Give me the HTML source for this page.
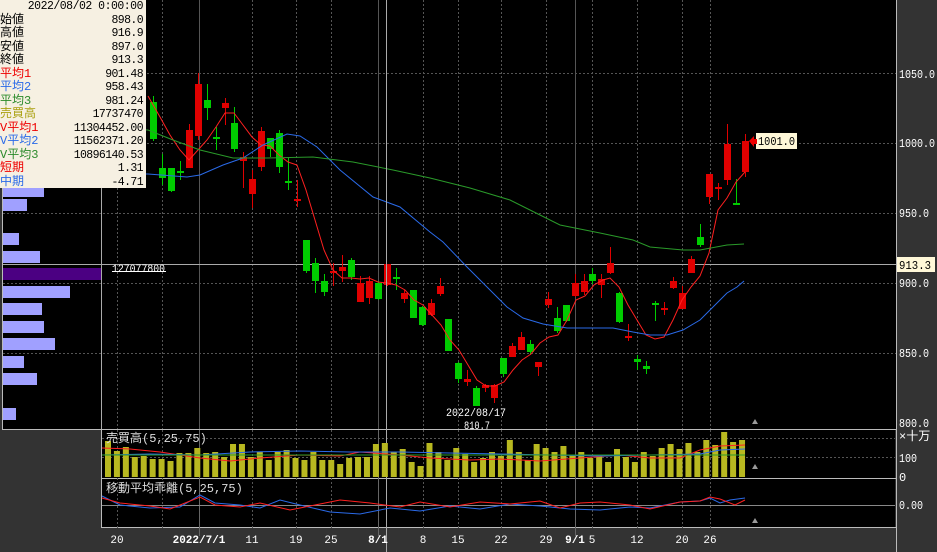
<!DOCTYPE html>
<html><head><meta charset="utf-8">
<style>
html,body{margin:0;padding:0;background:#333;width:937px;height:552px;overflow:hidden}
#info{position:absolute;left:0;top:0;width:146px;height:188px;background:#f6f0e2;font:12px "Liberation Mono","Noto Sans CJK JP",monospace;}
#info div{height:13.5px;line-height:13.5px;position:relative;white-space:nowrap}
#info span{position:absolute;right:3px;top:0;color:#000;font-size:11.5px;letter-spacing:-0.6px}
</style></head><body>
<svg id="s" width="937" height="552" style="position:absolute;left:0;top:0" font-family="Liberation Mono, monospace"></svg>
<div id="info">
<div style="text-align:right;padding-right:3px;color:#000;font-size:11.5px;letter-spacing:-0.5px">2022/08/02 0:00:00</div>
<div style="color:#000">始値<span>898.0</span></div>
<div style="color:#000">高値<span>916.9</span></div>
<div style="color:#000">安値<span>897.0</span></div>
<div style="color:#000">終値<span>913.3</span></div>
<div style="color:#e00">平均1<span>901.48</span></div>
<div style="color:#2a6ae8">平均2<span>958.43</span></div>
<div style="color:#2a8a2a">平均3<span>981.24</span></div>
<div style="color:#aaa010">売買高<span>17737470</span></div>
<div style="color:#e00">V平均1<span>11304452.00</span></div>
<div style="color:#2a6ae8">V平均2<span>11562371.20</span></div>
<div style="color:#2a8a2a">V平均3<span>10896140.53</span></div>
<div style="color:#e00">短期<span>1.31</span></div>
<div style="color:#2a6ae8">中期<span>-4.71</span></div>
</div>
<script>
var s=document.getElementById('s'),h='';
function R(x,y,w,hh,c){h+='<rect x="'+x+'" y="'+y+'" width="'+w+'" height="'+hh+'" fill="'+c+'"/>';}
function L(x1,y1,x2,y2,c,d){h+='<line x1="'+x1+'" y1="'+y1+'" x2="'+x2+'" y2="'+y2+'" stroke="'+c+'" stroke-width="1"'+(d?' stroke-dasharray="2,2"':'')+'/>';}
function P(pts,c){h+='<polyline fill="none" stroke="'+c+'" stroke-width="1" points="'+pts.map(function(p){return p.join(',')}).join(' ')+'"/>';}
function T(x,y,t,c,sz,a,w,tl){h+='<text x="'+x+'" y="'+y+'" fill="'+c+'" font-size="'+(sz||11)+'"'+(a?' text-anchor="'+a+'"':'')+(w?' font-weight="bold"':'')+(tl?' textLength="'+tl+'" lengthAdjust="spacingAndGlyphs"':'')+'>'+t+'</text>';}
R(0,0,937,552,'#333');
R(3,0,893,429,'#000');
R(102,430,793,98,'#000');
[73,143,213,283,353].forEach(function(y){L(3,y+.5,896,y+.5,'#555',1)});
[117,162,252,296,331,423,458,501,546,592,637,682,710].forEach(function(x){L(x+.5,0,x+.5,429,'#555',1)});
[199,378,575].forEach(function(x){L(x+.5,0,x+.5,429,'#555')});
var vp=[[185,41],[199,24],[233,16],[251,37],[286,67],[303,39],[321,41],[338,52],[356,21],[373,34],[408,13]];
vp.forEach(function(b){R(3,b[0],b[1],12,'#a0a0ff')});
R(3,268,98,12,'#4b0082');
L(101.5,188,101.5,429,'#aaa');
L(3,264.5,896,264.5,'#aaa');
T(112,272,'127077800','#fff',11,0,0,53);
L(112,271.5,166,271.5,'#fff');
var C=[
[153,'g',102,139,96,141],[162,'g',168,178,154,185],[171,'g',168,191,168,192],[180,'g',171,173,161,180],[189,'r',130,168,124,168],[198,'r',84,136,73,140],[207,'g',100,108,84,120],[216,'g',137,139,127,150],[225,'r',103,108,98,125],[234,'g',123,149,107,152],[243,'r',157,161,152,188],[252,'r',179,194,170,208],[261,'r',131,167,127,171],[270,'g',138,149,138,157],[279,'g',133,167,130,173],[288,'g',181,183,158,190],[297,'r',199,201,180,207],[306,'g',240,271,240,273],[315,'g',263,281,258,293],[324,'g',281,292,274,296],[333,'r',271,273,263,286],[342,'r',267,271,255,282],[351,'g',260,277,258,280],[360,'r',283,302,276,302],[369,'r',281,298,276,304],[378,'g',283,299,281,300],[387,'r',264,285,264,286],[396,'g',277,279,268,290],
[404,'r',293,299,290,303],[413,'g',290,318,290,318],[422,'g',307,325,306,326],[431,'r',303,315,299,316],[440,'r',286,294,278,296],[448,'g',319,351,319,351],[458,'g',363,379,362,383],[467,'r',379,382,370,386],[476,'g',388,406,386,406],[485,'r',385,388,384,392],[494,'r',385,398,384,403],[503,'g',358,374,358,377],[512,'r',346,357,343,357],[521,'r',337,350,332,350],[530,'g',344,352,340,354],[538,'r',362,367,362,376],[548,'r',299,305,292,308],[557,'g',318,331,307,333],[566,'g',305,321,305,322],[575,'r',283,296,274,297],[584,'r',281,292,274,295],[592,'g',274,281,268,284],[601,'r',279,285,274,298],[610,'r',263,273,247,274],[619,'g',293,322,292,323],[628,'r',336,338,324,341],[637,'g',359,362,355,370],[646,'g',366,369,361,374],[655,'g',303,305,301,321],[664,'r',308,310,302,315],[673,'r',281,288,277,289],[682,'r',293,309,286,309],[691,'r',259,273,256,273],[700,'g',237,245,224,247],[709,'r',174,197,174,204],[718,'r',187,189,183,200],[727,'r',144,180,124,185],[736,'g',203,205,179,205],[745,'r',141,172,134,177]];
C.forEach(function(c){var col=c[1]=='r'?'#e00000':'#00cc00';L(c[0]+.5,c[4],c[0]+.5,c[5],col);R(c[0]-3,c[2],7,Math.max(2,c[3]-c[2]),col);});
P([[148,96],[160,117],[170,135],[180,150],[189,160],[198,150],[207,140],[216,127],[225,113],[234,113],[243,125],[252,137],[261,145],[270,146],[279,155],[288,162],[297,165],[306,190],[315,220],[324,250],[333,270],[342,278],[351,278],[360,279],[369,278],[378,282],[387,283],[396,285],[405,290],[414,300],[423,305],[432,315],[441,325],[450,340],[459,350],[468,365],[477,380],[486,386],[495,386],[504,382],[513,370],[522,360],[531,354],[540,343],[549,337],[558,335],[567,320],[576,300],[585,296],[594,285],[603,280],[610,278],[619,287],[628,305],[637,320],[646,335],[655,339],[664,337],[673,320],[682,300],[691,287],[700,276],[709,253],[718,210],[727,198],[736,182],[745,172]],'#ff2020');
P([[100,174],[148,174],[187,177],[200,175],[223,165],[243,158],[263,145],[287,134],[300,136],[317,147],[340,170],[373,197],[400,207],[430,232],[443,242],[467,267],[507,307],[523,318],[543,324],[567,328],[613,328],[633,332],[650,335],[667,335],[683,330],[700,320],[710,310],[727,293],[737,287],[744,281]],'#2a6ae8');
P([[100,128],[148,130],[173,140],[200,150],[233,158],[267,158],[313,157],[353,162],[393,170],[430,178],[470,188],[510,200],[560,225],[600,233],[633,240],[650,247],[683,250],[700,250],[727,245],[744,244]],'#2a9a2a');
T(446,416,'2022/08/17','#fff',11,0,0,60);T(464,429,'810.7','#fff',11,0,0,26);
L(896.5,0,896.5,552,'#bbb');
[[1050,78],[1000,147],[950,217],[900,287],[850,357],[800,427]].forEach(function(a){var t=a[0].toFixed(1);T(899,a[1],t,'#fff',12,0,0,t.length*6);});
R(897,257,38,15,'#fff8d8');T(899,269,'913.3','#000',12,0,0,32);
R(756,133,41,16,'#fff8d8');T(758,145,'1001.0','#000',12,0,0,37);
h+='<polygon points="749,141 754,136 754,139 757,139 757,144 754,144 754,147" fill="#e00"/>';
h+='<polygon points="752,424 755,419 758,424" fill="#999"/><polygon points="752,469 755,464 758,469" fill="#999"/><polygon points="752,523 755,518 758,523" fill="#999"/>';
L(3,429.5,896,429.5,'#bbb');L(102,478.5,896,478.5,'#bbb');L(102,527.5,896,527.5,'#bbb');L(101.5,429,101.5,528,'#bbb');L(2.5,0,2.5,430,'#bbb');
L(102,438.5,895,438.5,'#555',1);L(102,457.5,895,457.5,'#555',1);
[117,162,252,296,331,423,458,501,546,592,637,682,710].forEach(function(x){L(x+.5,430,x+.5,528,'#555',1)});
[199,378,575].forEach(function(x){L(x+.5,430,x+.5,536,'#666')});
L(386.5,0,386.5,552,'#aaa');
var vt=[441,451,447,457,456,459,459,461,453,453,448,453,452,457,444,444,457,452,460,452,450,458,460,452,460,460,464,458,457,457,444,443,452,449,462,466,443,452,460,448,454,462,458,452,456,440,452,460,444,448,452,446,455,452,458,456,462,449,457,462,452,456,448,444,449,443,452,440,445,432,442,440];
for(var i=0;i<vt.length;i++){var x=108+8.93*i;if(x>748)break;R(x-3,vt[i],6,477-vt[i],'#b8b820');}
P([[102,448],[130,449],[160,452],[200,458],[230,461],[260,458],[300,455],[340,456],[360,452],[400,455],[430,458],[470,460],[500,459],[540,461],[580,458],[620,455],[650,458],[680,458],[700,450],[720,446],[745,445]],'#ff2020');
P([[102,455],[150,454],[200,455],[250,452],[300,451],[350,452],[400,452],[450,453],[500,454],[550,455],[600,456],[650,455],[700,454],[720,450],[745,449]],'#2a6ae8');
P([[102,455],[745,455]],'#2a9a2a');
T(106,442,'売買高(5,25,75)','#ddd',12);
T(899,440,'×十万','#fff',12);T(899,462,'100','#fff',12,0,0,18);T(899,481,'0','#fff',12);
L(102,505.5,895,505.5,'#888');
P([[102,496],[110,500],[120,505],[150,508],[180,507],[200,495],[215,503],[240,505],[260,508],[280,500],[300,505],[330,512],[360,514],[390,508],[420,511],[450,506],[480,509],[510,504],[540,506],[570,509],[600,510],[630,507],[650,508],[680,502],[700,501],[710,498],[720,503],[730,500],[745,498]],'#2a6ae8');
P([[102,498],[120,503],[150,506],[170,509],[200,497],[215,505],[240,507],[260,503],[290,510],[310,506],[340,500],[370,503],[400,507],[420,502],[450,507],[480,502],[510,504],[540,501],[560,508],[580,503],[600,502],[630,505],[650,509],[680,502],[700,501],[710,497],[720,499],[735,505],[745,500]],'#ff2020');
T(106,492,'移動平均乖離(5,25,75)','#ddd',12);
T(899,509,'0.00','#fff',12,0,0,24);
[[117,'20'],[252,'11'],[296,'19'],[331,'25'],[423,'8'],[458,'15'],[501,'22'],[546,'29'],[592,'5'],[637,'12'],[682,'20'],[710,'26']].forEach(function(d){T(d[0],543,d[1],'#fff',11,'middle')});
T(199,543,'2022/7/1','#fff',11,'middle',1);T(378,543,'8/1','#fff',11,'middle',1);T(575,543,'9/1','#fff',11,'middle',1);
s.innerHTML=h;
</script>
</body></html>
